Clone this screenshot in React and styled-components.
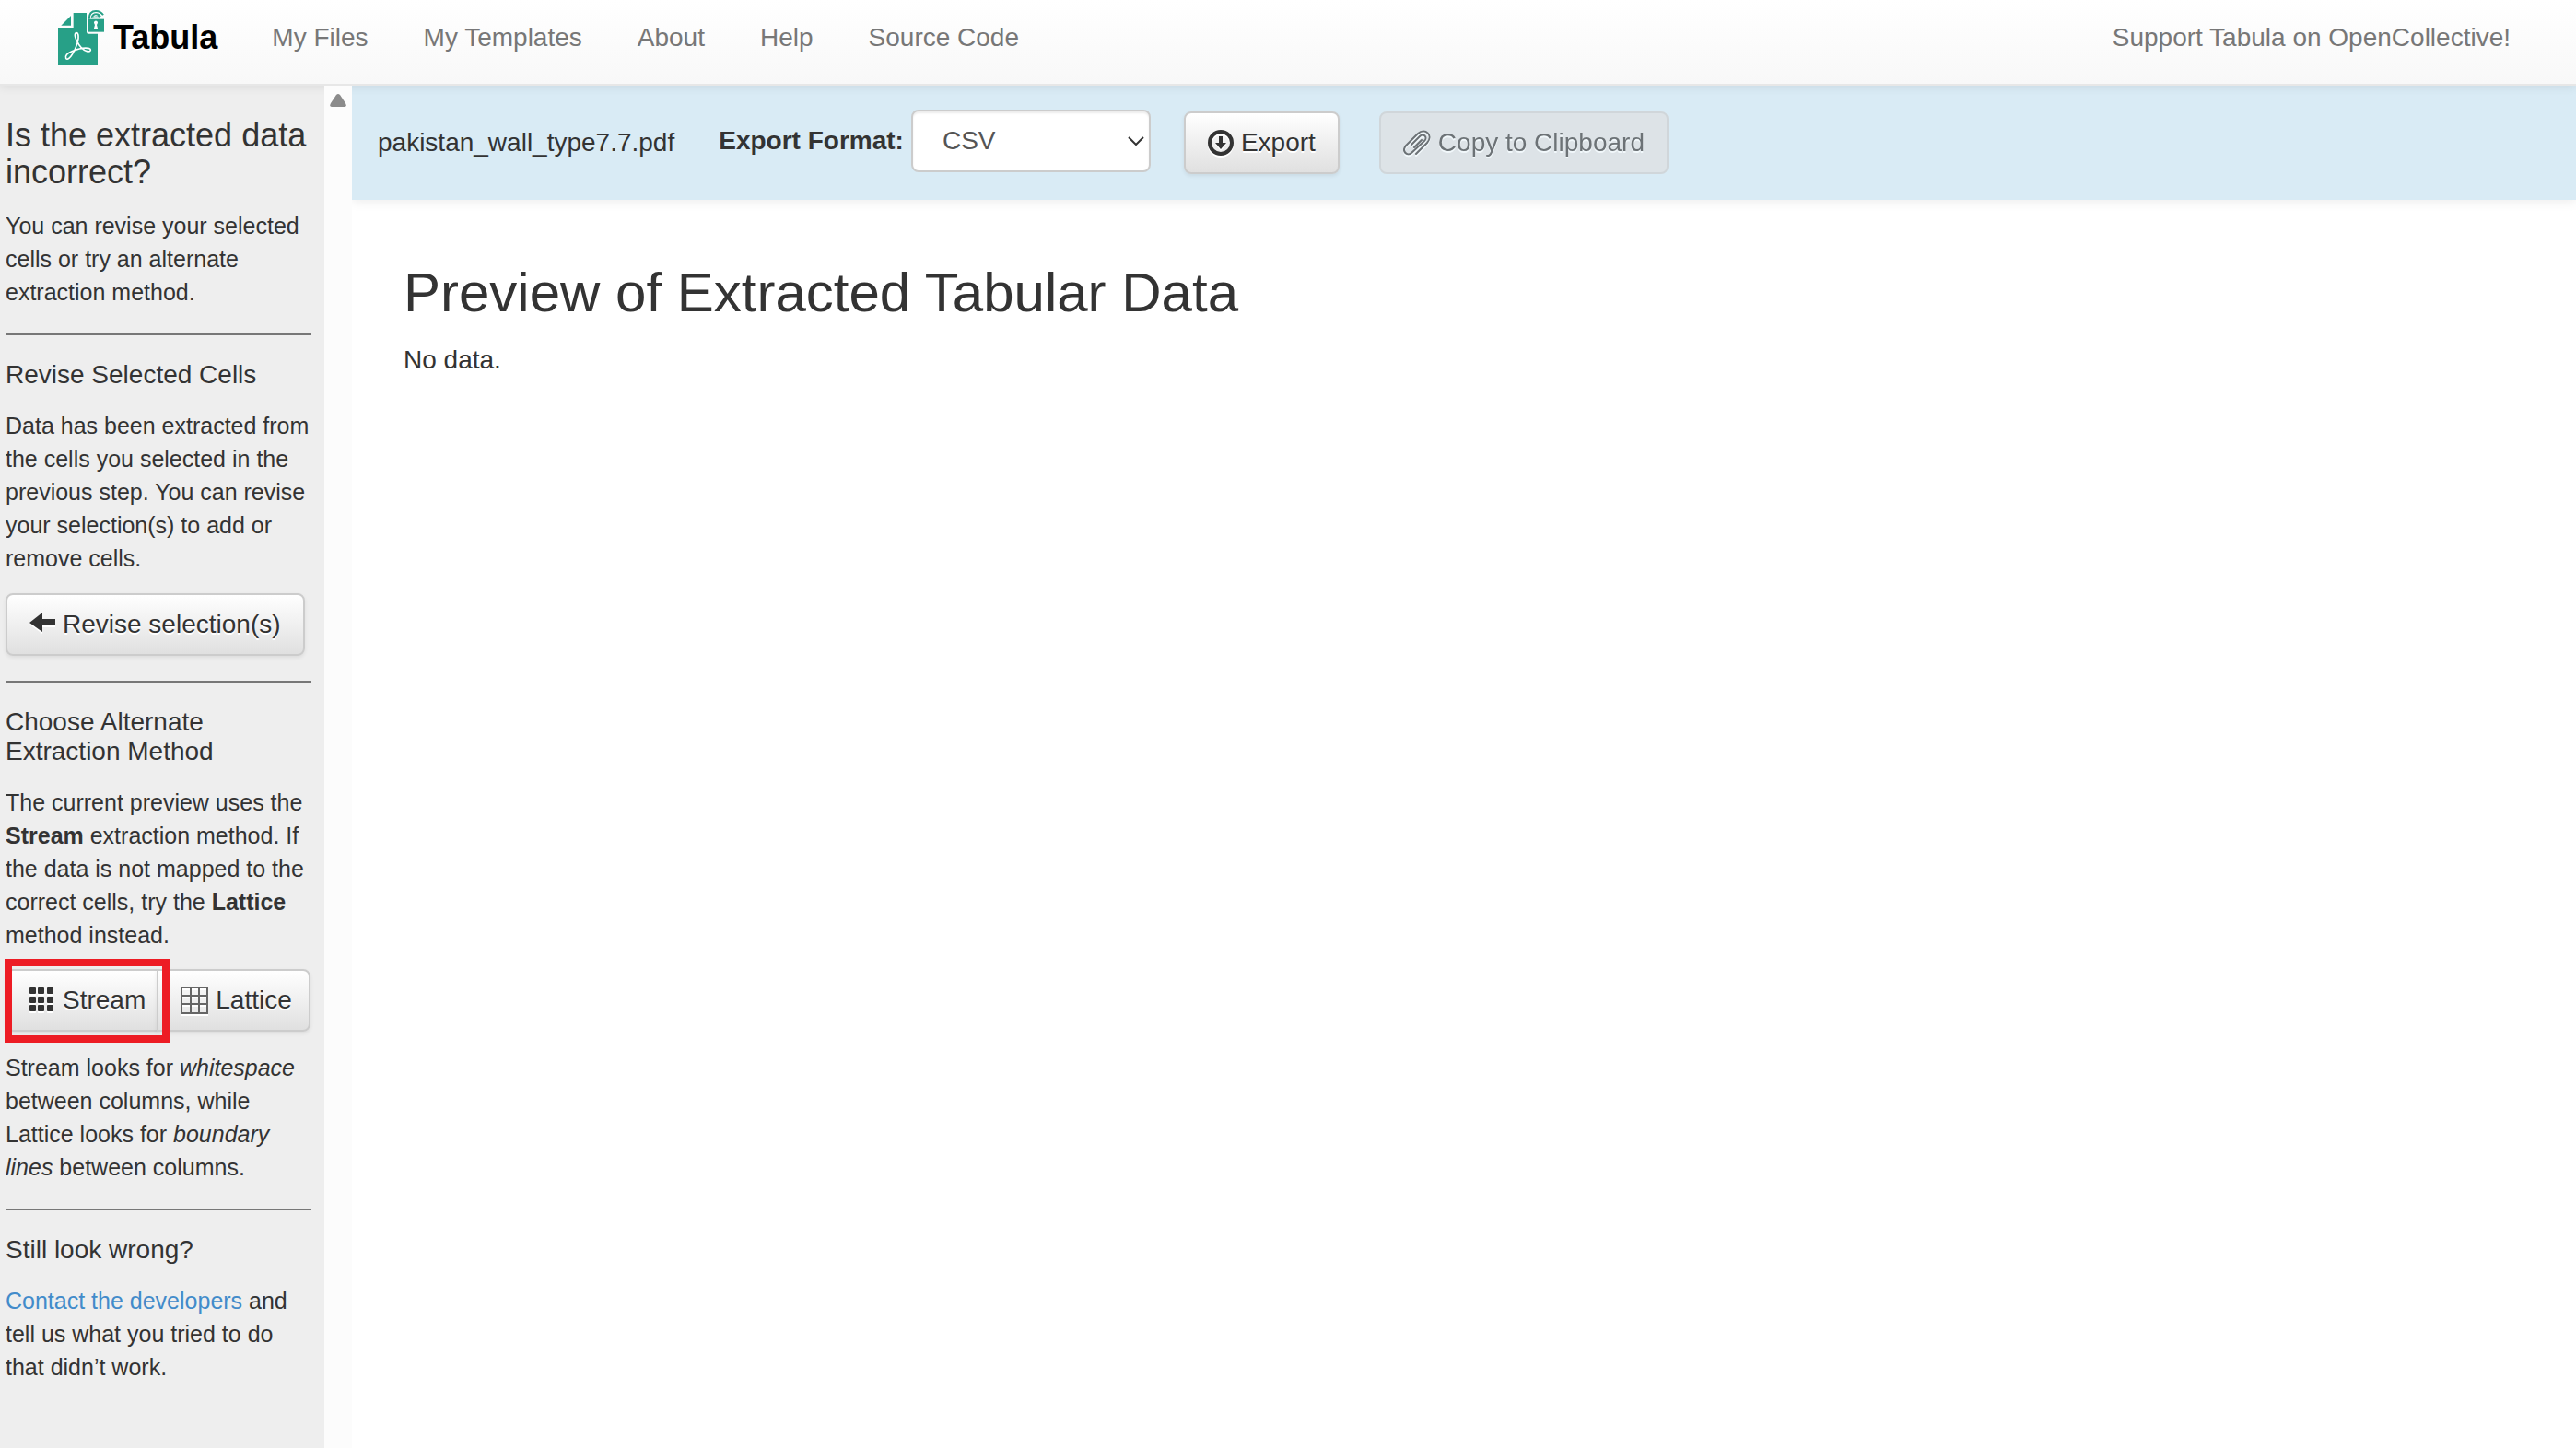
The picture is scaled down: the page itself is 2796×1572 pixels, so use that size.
import React, { useState } from "react";
import styled, { createGlobalStyle } from "styled-components";

const GlobalStyle = createGlobalStyle`
  *, *::before, *::after { box-sizing: border-box; }
  body {
    margin: 0;
    background: #fff;
    color: #333;
    font-family: "Liberation Sans", Arial, Helvetica, sans-serif;
    font-size: 28px;
    line-height: 40px;
  }
  button, select { font: inherit; }
`;

const Page = styled.div`
  display: flex;
  flex-direction: column;
  min-height: 100vh;
`;

const Navbar = styled.nav`
  position: relative;
  z-index: 1;
  display: flex;
  align-items: flex-start;
  padding: 0 41px 1px 63px;
  border-bottom: 2px solid #e7e7e7;
  background: linear-gradient(to bottom, #fff, #f8f8f8);
  box-shadow: 0 2px 10px rgba(0, 0, 0, 0.075);
`;

const Brand = styled.a`
  display: flex;
  align-items: center;
  gap: 10px;
  padding: 11px 29px 0 0;
  color: #000;
  font-size: 36px;
  font-weight: bold;
  text-decoration: none;
`;

const NavLinks = styled.div`
  display: flex;
  flex: 1;
`;

const NavLink = styled.a`
  padding: 21px 30px 29px;
  color: #777;
  text-decoration: none;
  margin-left: ${(p) => (p.$end ? "auto" : "0")};
`;

const Body = styled.div`
  display: flex;
  flex: 1;
`;

const Sidebar = styled.aside`
  width: 352px;
  flex: none;
  padding: 34px 14px 40px 6px;
  background: #eee;
`;

const ScrollTrack = styled.div`
  position: relative;
  z-index: 2;
  width: 30px;
  flex: none;
  display: flex;
  justify-content: center;
  align-items: flex-start;
  padding-top: 9px;
  background: #fcfcfc;
`;

const SideTitle = styled.h3`
  margin: 0 0 20px;
  font-size: 36px;
  font-weight: normal;
  line-height: 40px;
`;

const SideHeading = styled.h4`
  margin: 0 0 21px;
  font-size: 28px;
  font-weight: normal;
  line-height: 32px;
`;

const SideText = styled.p`
  margin: 0;
  font-size: 25px;
  line-height: 36px;
`;

const SideLink = styled.a`
  color: #428bca;
  text-decoration: none;
`;

const Rule = styled.hr`
  margin: 27px 0;
  border: 0;
  border-top: 2px solid #777;
`;

const Button = styled.button`
  display: flex;
  align-items: center;
  gap: 8px;
  padding: 12px 24px;
  border: 2px solid #ccc;
  border-radius: 8px;
  background: linear-gradient(to bottom, #fff, #e0e0e0);
  box-shadow: 0 2px 4px rgba(0, 0, 0, 0.075);
  color: #333;
  line-height: 40px;
  text-shadow: 0 2px 0 #fff;
  white-space: nowrap;

  svg { flex: none; filter: drop-shadow(0 2px 0 #fff); }

  &:disabled {
    background: #e0e0e0;
    color: #333;
    box-shadow: none;
    opacity: 0.65;
  }
`;

const ReviseButton = styled(Button)`
  margin-top: 20px;
`;

const MethodGroup = styled.div`
  position: relative;
  display: flex;
  margin: 19px 0 21px;
`;

const StreamButton = styled(Button)`
  padding-right: 12px;
  border-radius: 8px 0 0 8px;
`;

const LatticeButton = styled(Button)`
  margin-left: -2px;
  padding-right: 18px;
  border-radius: 0 8px 8px 0;
`;

const Highlight = styled.div`
  position: absolute;
  top: -11px;
  left: -1px;
  width: 179px;
  height: 91px;
  border: 8px solid #ed1c24;
  pointer-events: none;
`;

const Content = styled.main`
  flex: 1;
  min-width: 0;
`;

const Toolbar = styled.div`
  display: flex;
  align-items: center;
  padding: 26px 28px;
  background: #d9ebf5;
  box-shadow: 0 2px 12px rgba(0, 0, 0, 0.08);
`;

const FileName = styled.span`
  margin-right: 48px;
`;

const FormatField = styled.div`
  display: flex;
  align-items: center;
  gap: 8px;
  margin: 0 36px 4px 0;
`;

const FormatLabel = styled.label`
  font-weight: bold;
`;

const SelectWrap = styled.div`
  display: grid;
  align-items: center;

  > * { grid-area: 1 / 1; }
  svg { justify-self: end; margin-right: 7px; pointer-events: none; }
`;

const Select = styled.select`
  width: 260px;
  height: 68px;
  padding: 0 32px;
  border: 2px solid #ccc;
  border-radius: 8px;
  appearance: none;
  background: #fff;
  box-shadow: inset 0 2px 2px rgba(0, 0, 0, 0.075);
  color: #555;
`;

const Actions = styled.div`
  display: flex;
  gap: 43px;
`;

const Preview = styled.section`
  padding: 68px 56px;
`;

const PreviewTitle = styled.h1`
  margin: 0 0 20px;
  font-size: 60px;
  font-weight: normal;
  line-height: 66px;
`;

const PreviewText = styled.p`
  margin: 0;
`;

function Logo() {
  return (
    <svg width="50" height="60" viewBox="39 33 150 180" aria-hidden="true">
      <path fill="#27a087" d="M89 42h43v62q0 6 6 6h30v103H39V90h50z" />
      <path fill="#27a087" d="M81 51v32H49z" />
      <path fill="#27a087" d="M138 62h51v42h-51z" />
      <path fill="none" stroke="#27a087" strokeWidth="6" d="M140 62c0-19 9-26 22-26 11 0 19 5 24 13" />
      <path fill="#27a087" d="M146 58c1-10 8-15 17-15 8 0 14 5 16 10l-5 3c-9-2-20-2-28 2z" />
      <path fill="#fff" d="M154 54c2-7 13-7 15-1-5-1-10-1-15 1z" />
      <path fill="#fff" d="M157 77a6 6 0 1 1 10 0l-2 4 4 15h-14l4-15z" />
      <path
        fill="none"
        stroke="#fff"
        strokeWidth="5"
        strokeLinejoin="round"
        d="M99 107c-8 2-5 14 0 24 9 19 22 33 34 36 11 3 16-6 8-9-14-4-39 2-57 9-15 6-23 15-19 23 4 7 14-2 21-14 9-16 17-35 19-50 1-12-1-19-6-19z"
      />
    </svg>
  );
}

function ArrowLeftIcon() {
  return (
    <svg width="28" height="28" viewBox="0 0 28 28" aria-hidden="true">
      <path fill="#333" d="M0 12 14 1v7h14v7H14v7z" />
    </svg>
  );
}

function StreamIcon() {
  return (
    <svg width="28" height="28" viewBox="0 0 28 28" fill="#333" aria-hidden="true">
      {[0, 10, 19].map((y) =>
        [0, 9, 19].map((x) => <rect key={`${x}-${y}`} x={x} y={y} width="7" height="7" rx="1" />)
      )}
    </svg>
  );
}

function LatticeIcon() {
  return (
    <svg width="30" height="30" viewBox="0 0 30 30" aria-hidden="true">
      <path fill="none" stroke="#666" strokeWidth="2" d="M1 1h28v28H1zM11 1v28M20 1v28M1 10h28M1 19h28" />
    </svg>
  );
}

function ExportIcon() {
  return (
    <svg width="28" height="28" viewBox="0 0 28 28" aria-hidden="true">
      <circle cx="14" cy="14" r="12" fill="none" stroke="#333" strokeWidth="4" />
      <path fill="#333" d="M12 7h4v7h4l-6 7-6-7h4z" />
    </svg>
  );
}

function PaperclipIcon() {
  return (
    <svg width="30" height="28" viewBox="0 0 30 28" aria-hidden="true">
      <path
        fill="none"
        stroke="#333"
        strokeWidth="2"
        strokeLinecap="round"
        strokeLinejoin="round"
        d="M14 26 26 14C33 6 24-3 16 4L3 17c-5 6 1 12 6 8L23 12c4-4-1-9-5-5L9 16M12 19l8-8"
      />
    </svg>
  );
}

export default function App() {
  const [format, setFormat] = useState("CSV");
  return (
    <>
      <GlobalStyle />
      <Page>
        <Navbar>
          <Brand href="#">
            <Logo />
            Tabula
          </Brand>
          <NavLinks>
            <NavLink href="#files">My Files</NavLink>
            <NavLink href="#templates">My Templates</NavLink>
            <NavLink href="#about">About</NavLink>
            <NavLink href="#help">Help</NavLink>
            <NavLink href="#source">Source Code</NavLink>
            <NavLink href="#support" $end>
              Support Tabula on OpenCollective!
            </NavLink>
          </NavLinks>
        </Navbar>
        <Body>
          <Sidebar>
            <SideTitle>Is the extracted data incorrect?</SideTitle>
            <SideText>You can revise your selected cells or try an alternate extraction method.</SideText>
            <Rule />
            <SideHeading>Revise Selected Cells</SideHeading>
            <SideText>
              Data has been extracted from the cells you selected in the previous step. You can revise your
              selection(s) to add or remove cells.
            </SideText>
            <ReviseButton type="button">
              <ArrowLeftIcon />
              Revise selection(s)
            </ReviseButton>
            <Rule />
            <SideHeading>Choose Alternate Extraction Method</SideHeading>
            <SideText>
              The current preview uses the <b>Stream</b> extraction method. If the data is not mapped to the correct
              cells, try the <b>Lattice</b> method instead.
            </SideText>
            <MethodGroup>
              <StreamButton type="button">
                <StreamIcon />
                Stream
              </StreamButton>
              <LatticeButton type="button">
                <LatticeIcon />
                Lattice
              </LatticeButton>
              <Highlight />
            </MethodGroup>
            <SideText>
              Stream looks for <i>whitespace</i> between columns, while Lattice looks for <i>boundary lines</i> between
              columns.
            </SideText>
            <Rule />
            <SideHeading>Still look wrong?</SideHeading>
            <SideText>
              <SideLink href="#contact">Contact the developers</SideLink> and tell us what you tried to do that didn’t
              work.
            </SideText>
          </Sidebar>
          <ScrollTrack>
            <svg width="18" height="14" viewBox="0 0 18 14" aria-hidden="true">
              <path fill="#8b8b8b" d="M7 1q2-2 4 0l6 9q2 4-1 4H2q-3 0-1-4z" />
            </svg>
          </ScrollTrack>
          <Content>
            <Toolbar>
              <FileName>pakistan_wall_type7.7.pdf</FileName>
              <FormatField>
                <FormatLabel htmlFor="format">Export Format:</FormatLabel>
                <SelectWrap>
                  <Select id="format" value={format} onChange={(e) => setFormat(e.target.value)}>
                    <option>CSV</option>
                    <option>TSV</option>
                    <option>JSON</option>
                  </Select>
                  <svg width="18" height="10" viewBox="0 0 18 10" aria-hidden="true">
                    <path fill="none" stroke="#333" strokeWidth="2" d="M1 1l8 8 8-8" />
                  </svg>
                </SelectWrap>
              </FormatField>
              <Actions>
                <Button type="button">
                  <ExportIcon />
                  Export
                </Button>
                <Button type="button" disabled>
                  <PaperclipIcon />
                  Copy to Clipboard
                </Button>
              </Actions>
            </Toolbar>
            <Preview>
              <PreviewTitle>Preview of Extracted Tabular Data</PreviewTitle>
              <PreviewText>No data.</PreviewText>
            </Preview>
          </Content>
        </Body>
      </Page>
    </>
  );
}
